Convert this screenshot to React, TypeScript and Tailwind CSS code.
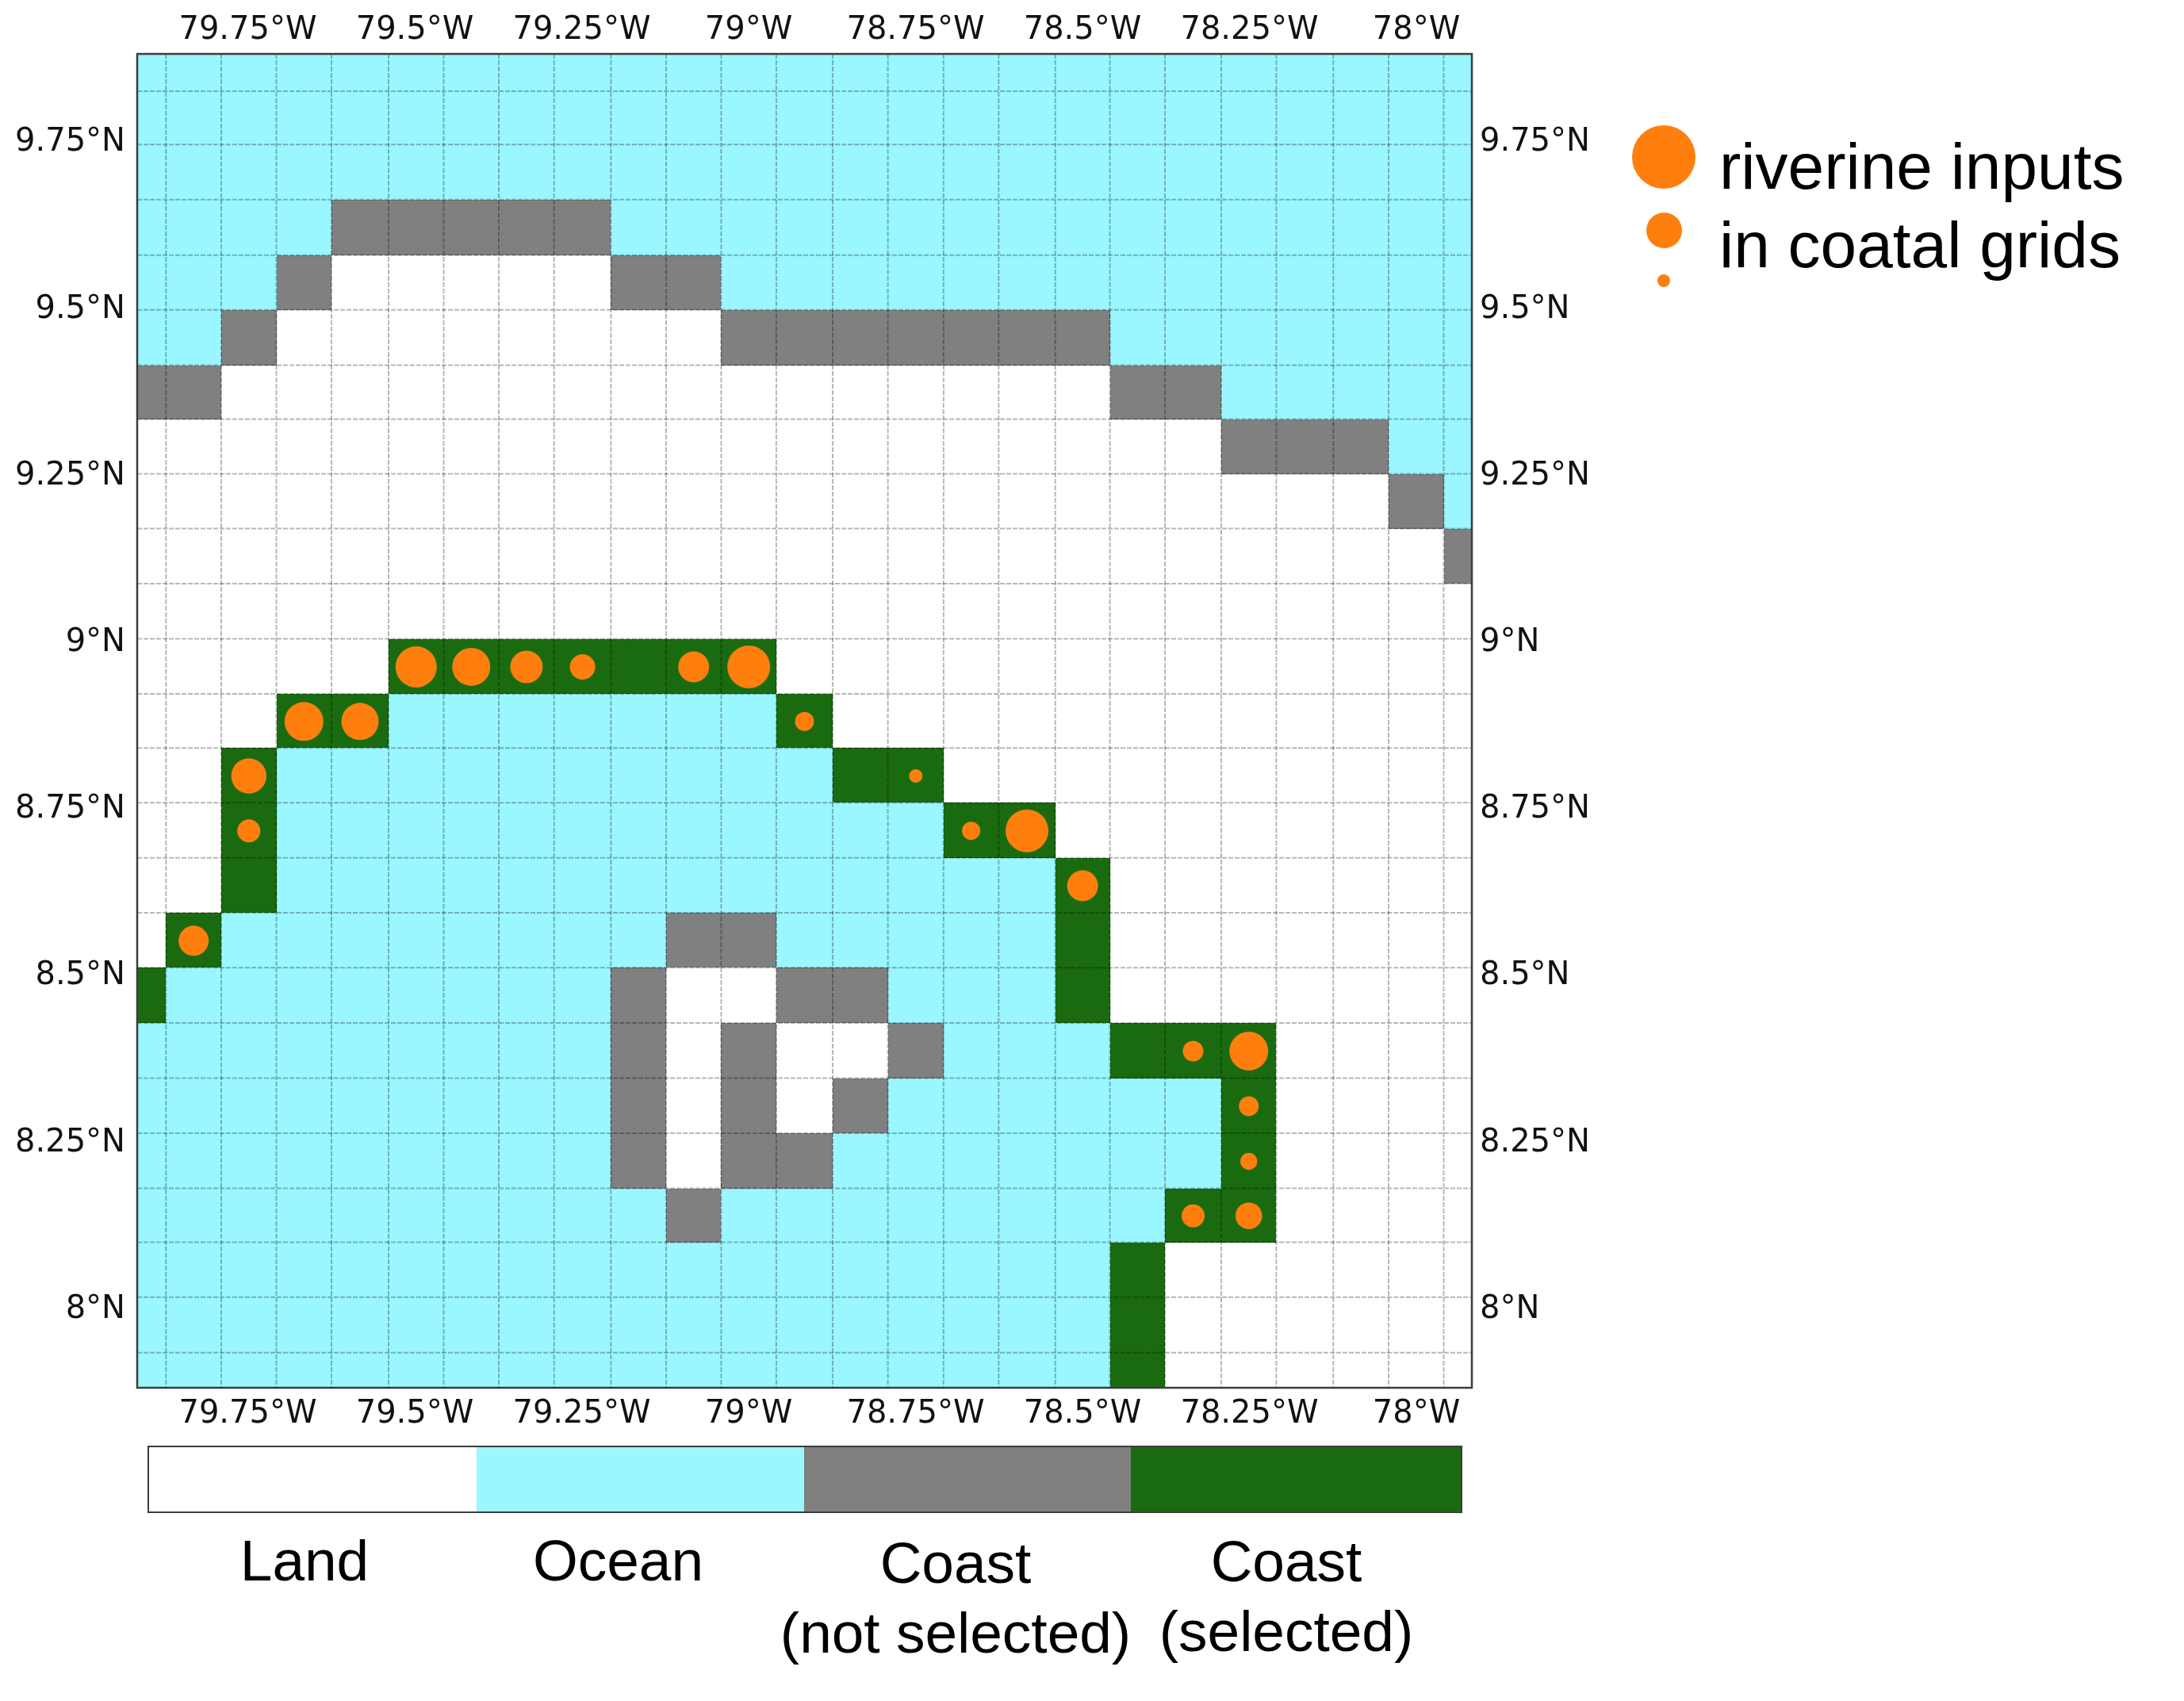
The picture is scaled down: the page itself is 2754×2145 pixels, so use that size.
const OCEAN = "#9af6ff";
const GRAY = "#808080";
const GREEN = "#1a6b10";
const ORANGE = "#ff7f0e";

type Run = [string, number, number];
const L = "L", O = "O", G = "G", S = "S";
const FILL: Record<string, string> = { L: "#ffffff", O: OCEAN, G: GRAY, S: GREEN };

// Per row: [kind, first column, last column]; columns 0 and 24, rows 0 and 24 are clipped by the frame.
const ROWS: Run[][] = [
  [[O, 0, 24]],
  [[O, 0, 24]],
  [[O, 0, 24]],
  [[O, 0, 3], [G, 4, 8], [O, 9, 24]],
  [[O, 0, 2], [G, 3, 3], [L, 4, 8], [G, 9, 10], [O, 11, 24]],
  [[O, 0, 1], [G, 2, 2], [L, 3, 10], [G, 11, 17], [O, 18, 24]],
  [[G, 0, 1], [L, 2, 17], [G, 18, 19], [O, 20, 24]],
  [[L, 0, 19], [G, 20, 22], [O, 23, 24]],
  [[L, 0, 22], [G, 23, 23], [O, 24, 24]],
  [[L, 0, 23], [G, 24, 24]],
  [[L, 0, 24]],
  [[L, 0, 4], [S, 5, 11], [L, 12, 24]],
  [[L, 0, 2], [S, 3, 4], [O, 5, 11], [S, 12, 12], [L, 13, 24]],
  [[L, 0, 1], [S, 2, 2], [O, 3, 12], [S, 13, 14], [L, 15, 24]],
  [[L, 0, 1], [S, 2, 2], [O, 3, 14], [S, 15, 16], [L, 17, 24]],
  [[L, 0, 1], [S, 2, 2], [O, 3, 16], [S, 17, 17], [L, 18, 24]],
  [[L, 0, 0], [S, 1, 1], [O, 2, 9], [G, 10, 11], [O, 12, 16], [S, 17, 17], [L, 18, 24]],
  [[S, 0, 0], [O, 1, 8], [G, 9, 9], [L, 10, 11], [G, 12, 13], [O, 14, 16], [S, 17, 17], [L, 18, 24]],
  [[O, 0, 8], [G, 9, 9], [L, 10, 10], [G, 11, 11], [L, 12, 13], [G, 14, 14], [O, 15, 17], [S, 18, 20], [L, 21, 24]],
  [[O, 0, 8], [G, 9, 9], [L, 10, 10], [G, 11, 11], [L, 12, 12], [G, 13, 13], [O, 14, 19], [S, 20, 20], [L, 21, 24]],
  [[O, 0, 8], [G, 9, 9], [L, 10, 10], [G, 11, 12], [O, 13, 19], [S, 20, 20], [L, 21, 24]],
  [[O, 0, 9], [G, 10, 10], [O, 11, 18], [S, 19, 20], [L, 21, 24]],
  [[O, 0, 17], [S, 18, 18], [L, 19, 24]],
  [[O, 0, 17], [S, 18, 18], [L, 19, 24]],
  [[O, 0, 17], [S, 18, 18], [L, 19, 24]],
];

const LEFT = 173, RIGHT = 1856, TOP = 68, BOTTOM = 1750;
// The grid pitch of the reference is not even (its raster snapped), so the lines are listed.
const COL_LINES = [209.3, 279, 348.5, 418, 490, 559.5, 629, 698.7, 770.4, 840, 909.4, 978.9, 1050, 1119.6, 1189.8, 1259.3, 1330.7, 1399.6, 1469, 1540, 1609.4, 1681.3, 1751, 1820.5];
const ROW_LINES = [115, 182.3, 251.7, 321.7, 390.7, 460.5, 528.5, 597.5, 666.5, 736, 805.5, 875, 943.3, 1012.3, 1081.7, 1151, 1220.3, 1290, 1359.5, 1429, 1498.5, 1566.5, 1635.7, 1705.7];
const cellL = (c: number) => (c === 0 ? LEFT : COL_LINES[c - 1]);
const cellR = (c: number) => (c === 24 ? RIGHT : COL_LINES[c]);
const cellT = (r: number) => (r === 0 ? TOP : ROW_LINES[r - 1]);
const cellB = (r: number) => (r === 24 ? BOTTOM : ROW_LINES[r]);

// [column, row, radius]
const DOTS: [number, number, number][] = [
  [5, 11, 26], [6, 11, 24], [7, 11, 20.5], [8, 11, 16], [10, 11, 19.5], [11, 11, 27],
  [3, 12, 24.5], [4, 12, 23.5], [12, 12, 12],
  [2, 13, 22.2], [14, 13, 8.5],
  [2, 14, 14.5], [15, 14, 11.5], [16, 14, 27],
  [17, 15, 19.5],
  [1, 16, 19],
  [19, 18, 13], [20, 18, 24.5],
  [20, 19, 12.5],
  [20, 20, 10.7],
  [19, 21, 14.5], [20, 21, 16.8],
];

const LON = ["79.75°W", "79.5°W", "79.25°W", "79°W", "78.75°W", "78.5°W", "78.25°W", "78°W"];
const LAT = ["9.75°N", "9.5°N", "9.25°N", "9°N", "8.75°N", "8.5°N", "8.25°N", "8°N"];

function MapChart() {
  return (
    <svg width={2020} height={1812} viewBox="0 0 2020 1812" className="block font-['DejaVu_Sans',sans-serif] text-[40px] blur-[0.5px]" fill="#111111">
      {ROWS.map((row, r) =>
        row.map(([kind, a, b]) => (
          <rect
            key={`${r}-${a}`}
            x={cellL(a)}
            y={cellT(r)}
            width={cellR(b) - cellL(a)}
            height={cellB(r) - cellT(r)}
            fill={FILL[kind]}
            shapeRendering="crispEdges"
          />
        ))
      )}
      {COL_LINES.map((x) => (
        <line key={`v${x}`} x1={x} x2={x} y1={TOP} y2={BOTTOM} stroke="#000" strokeOpacity={0.28} strokeWidth={2} strokeDasharray="6 2" />
      ))}
      {ROW_LINES.map((y) => (
        <line key={`h${y}`} x1={LEFT} x2={RIGHT} y1={y} y2={y} stroke="#000" strokeOpacity={0.28} strokeWidth={2} strokeDasharray="6 2" />
      ))}
      {DOTS.map(([c, r, d]) => (
        <circle key={`${c}-${r}`} cx={(cellL(c) + cellR(c)) / 2} cy={(cellT(r) + cellB(r)) / 2 + 0.7} r={d} fill={ORANGE} />
      ))}
      <rect x={LEFT} y={TOP} width={RIGHT - LEFT} height={BOTTOM - TOP} fill="none" stroke="#3c3c3c" strokeWidth={2.5} />
      {LON.map((t, i) => (
        <g key={t} textAnchor="middle">
          <text x={312.5 + 210.5 * i} y={49}>{t}</text>
          <text x={312.5 + 210.5 * i} y={1794}>{t}</text>
        </g>
      ))}
      {LAT.map((t, i) => (
        <g key={t}>
          <text x={158} y={190.3 + 210.2 * i} textAnchor="end">{t}</text>
          <text x={1866} y={190.3 + 210.2 * i}>{t}</text>
        </g>
      ))}
    </svg>
  );
}

function ColorBar() {
  return (
    <div className="ml-[186px] mt-[11px] flex h-[85px] w-[1658px] border-2 border-[#3c3c3c] blur-[0.5px]">
      <div className="w-[413px] bg-white" />
      <div className="w-[413px] bg-[#9af6ff]" />
      <div className="w-[412px] bg-[#808080]" />
      <div className="flex-1 bg-[#1a6b10]" />
    </div>
  );
}

function ColorLabels() {
  return (
    <div className="ml-[187px] flex text-center text-[73px] leading-[88px] text-black">
      <div className="mt-4 w-[394px]">Land</div>
      <div className="mt-4 w-[397px]">Ocean</div>
      <div className="mt-[19px] w-[454px] whitespace-nowrap">
        Coast
        <br />
        (not selected)
      </div>
      <div className="mt-[17px] w-[380px] whitespace-nowrap">
        Coast
        <br />
        (selected)
      </div>
    </div>
  );
}

function Legend() {
  return (
    <div className="ml-[38px] flex gap-[30px]">
      <div className="flex w-20 flex-col items-center pt-[158px]">
        <div className="h-20 w-20 rounded-full bg-[#ff7f0e]" />
        <div className="mt-[30px] h-[45px] w-[45px] rounded-full bg-[#ff7f0e]" />
        <div className="mt-[33px] h-4 w-4 rounded-full bg-[#ff7f0e]" />
      </div>
      <div className="pt-40 text-[82px] leading-[99px] text-black">
        <div className="whitespace-nowrap">riverine inputs</div>
        <div className="whitespace-nowrap">in coatal grids</div>
      </div>
    </div>
  );
}

export default function App() {
  return (
    <div className="flex min-h-[2145px] w-[2754px] items-start bg-white font-['Liberation_Sans',Arial,sans-serif]">
      <div className="w-[2020px] shrink-0">
        <MapChart />
        <ColorBar />
        <ColorLabels />
      </div>
      <Legend />
    </div>
  );
}
